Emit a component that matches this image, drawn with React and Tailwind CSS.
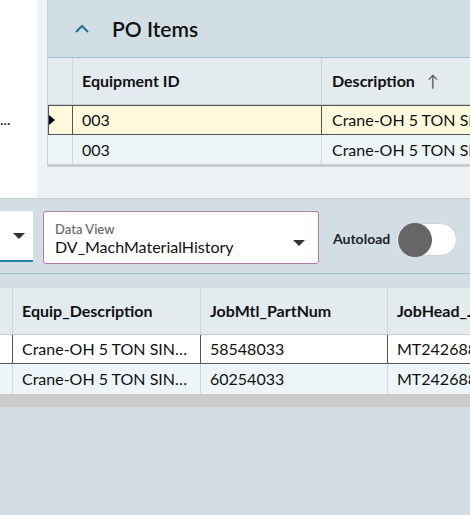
import React from "react";

const font = { fontFamily: '"Lato", "Liberation Sans", sans-serif' };

function Caret({ className = "" }) {
  return (
    <svg width="12" height="6" viewBox="0 0 12 6" className={className}>
      <path d="M0 0 L12 0 L6 6 Z" fill="#333" />
    </svg>
  );
}

function ChevronUp() {
  return (
    <svg width="16" height="10" viewBox="0 0 16 10">
      <path d="M2 8 L8 2 L14 8" fill="none" stroke="#236d96" strokeWidth="2" />
    </svg>
  );
}

export default function App() {
  return (
    <div
      className="w-[470px] h-[515px] overflow-hidden bg-[#d2dee4] text-[#111] flex flex-col"
      style={font}
    >
      {/* top section */}
      <div className="h-[199px] flex shrink-0 border-b border-[#c9d1d6] bg-[#eef2f5]">
        <div className="w-[37px] bg-white flex flex-col shrink-0">
          <div className="h-[109px]" />
          <div className="text-[15px] leading-[20px] pl-0">...</div>
        </div>
        <div className="flex-1 pl-[10px] overflow-hidden">
          <div className="w-[600px] flex flex-col border-l border-[#c8d0d5]">
            <div className="h-[58px] bg-[#d1dee4] border-b border-[#9dc2d0] flex items-center">
              <div className="w-[64px] flex justify-center pl-[4px]">
                <ChevronUp />
              </div>
              <div className="text-[21px] leading-[26px] font-semibold text-[#111]">PO Items</div>
            </div>
            {/* grid header */}
            <div className="h-[47px] bg-[#e4ebef] flex border-b border-[#c6cdd1]">
              <div className="w-[25px] border-r border-[#cfd5d8]" />
              <div className="w-[249px] border-r border-[#cfd5d8] flex items-center pl-[9px] text-[16px] font-bold">
                Equipment ID
              </div>
              <div className="flex-1 flex items-center pl-[10px] text-[16px] font-bold">
                Description
                <span className="ml-[12px] text-[#555] font-normal text-[16px]">↑</span>
              </div>
            </div>
            {/* row 1 */}
            <div className="h-[30px] bg-[#fff9de] flex border-y border-[#555] border-l">
              <div className="w-[24px] border-r border-[#555] flex items-center">
                <svg width="6" height="10" viewBox="0 0 6 10">
                  <path d="M0 0 L6 5 L0 10 Z" fill="#000" />
                </svg>
              </div>
              <div className="w-[249px] border-r border-[#555] flex items-center pl-[9px] text-[16px]">
                003
              </div>
              <div className="flex-1 flex items-center pl-[10px] text-[16px] whitespace-nowrap">
                Crane-OH 5 TON SINGLE
              </div>
            </div>
            {/* row 2 */}
            <div className="h-[29px] bg-[#eef5f8] flex">
              <div className="w-[25px] border-r border-[#cfd5d8]" />
              <div className="w-[249px] border-r border-[#cfd5d8] flex items-center pl-[9px] text-[16px]">
                003
              </div>
              <div className="flex-1 flex items-center pl-[10px] text-[16px] whitespace-nowrap">
                Crane-OH 5 TON SINGLE
              </div>
            </div>
            <div className="h-[3px] bg-[#cbcbcb]" />
          </div>
        </div>
      </div>

      {/* toolbar */}
      <div className="h-[75px] shrink-0 bg-[#d2dee4] border-b border-[#9dc2d0] flex items-start pt-[12px]">
        <div className="w-[33px] h-[51px] bg-white border-b-2 border-[#2f7fb0] flex items-center justify-end pr-[8px] shrink-0">
          <Caret />
        </div>
        <div className="ml-[10px] w-[276px] h-[53px] bg-white border border-[#b57aa7] rounded-[3px] flex items-center shrink-0">
          <div className="flex-1 pl-[11px] flex flex-col">
            <span className="text-[13px] leading-[15px] font-semibold text-[#6d6d6d] mt-[3px]">Data View</span>
            <span className="text-[16px] leading-[20px] text-[#111]">DV_MachMaterialHistory</span>
          </div>
          <div className="pr-[13px] pt-[10px]">
            <Caret />
          </div>
        </div>
        <div className="ml-[14px] mt-[17px] text-[14px] font-bold text-[#222]">Autoload</div>
        <div className="ml-[6px] mt-[12px] w-[61px] h-[33px] rounded-full bg-white border border-[#cfd3d5] relative shrink-0">
          <div className="absolute left-[1px] top-[-1px] w-[34px] h-[34px] rounded-full bg-[#666]" />
        </div>
      </div>

      <div className="h-[14px] shrink-0" />

      {/* bottom grid */}
      <div className="w-[600px] flex flex-col shrink-0">
        <div className="h-[47px] bg-[#e4ebef] flex border-b border-[#c6cdd1]">
          <div className="w-[13px] border-r border-[#cfd5d8]" />
          <div className="w-[188px] border-r border-[#cfd5d8] flex items-center pl-[9px] text-[16px] font-bold">
            Equip_Description
          </div>
          <div className="w-[187px] border-r border-[#cfd5d8] flex items-center pl-[9px] text-[16px] font-bold">
            JobMtl_PartNum
          </div>
          <div className="flex-1 flex items-center pl-[9px] text-[16px] font-bold">JobHead_JobNum</div>
        </div>
        <div className="h-[29px] bg-white flex border-b border-[#555]">
          <div className="w-[13px] border-r border-[#555]" />
          <div className="w-[188px] border-r border-[#555] flex items-center pl-[9px] pr-[10px] text-[16px] min-w-0">
            <span className="truncate">Crane-OH 5 TON SINGLE GIRDER</span>
          </div>
          <div className="w-[187px] border-r border-[#555] flex items-center pl-[9px] text-[16px]">
            58548033
          </div>
          <div className="flex-1 flex items-center pl-[9px] text-[16px]">MT242688</div>
        </div>
        <div className="h-[30px] bg-[#eef5f8] flex">
          <div className="w-[13px] border-r border-[#cfd5d8]" />
          <div className="w-[188px] border-r border-[#cfd5d8] flex items-center pl-[9px] pr-[10px] text-[16px] min-w-0">
            <span className="truncate">Crane-OH 5 TON SINGLE GIRDER</span>
          </div>
          <div className="w-[187px] border-r border-[#cfd5d8] flex items-center pl-[9px] text-[16px]">
            60254033
          </div>
          <div className="flex-1 flex items-center pl-[9px] text-[16px]">MT242688</div>
        </div>
        <div className="h-[13px] bg-[#cbcbcb]" />
      </div>
    </div>
  );
}
